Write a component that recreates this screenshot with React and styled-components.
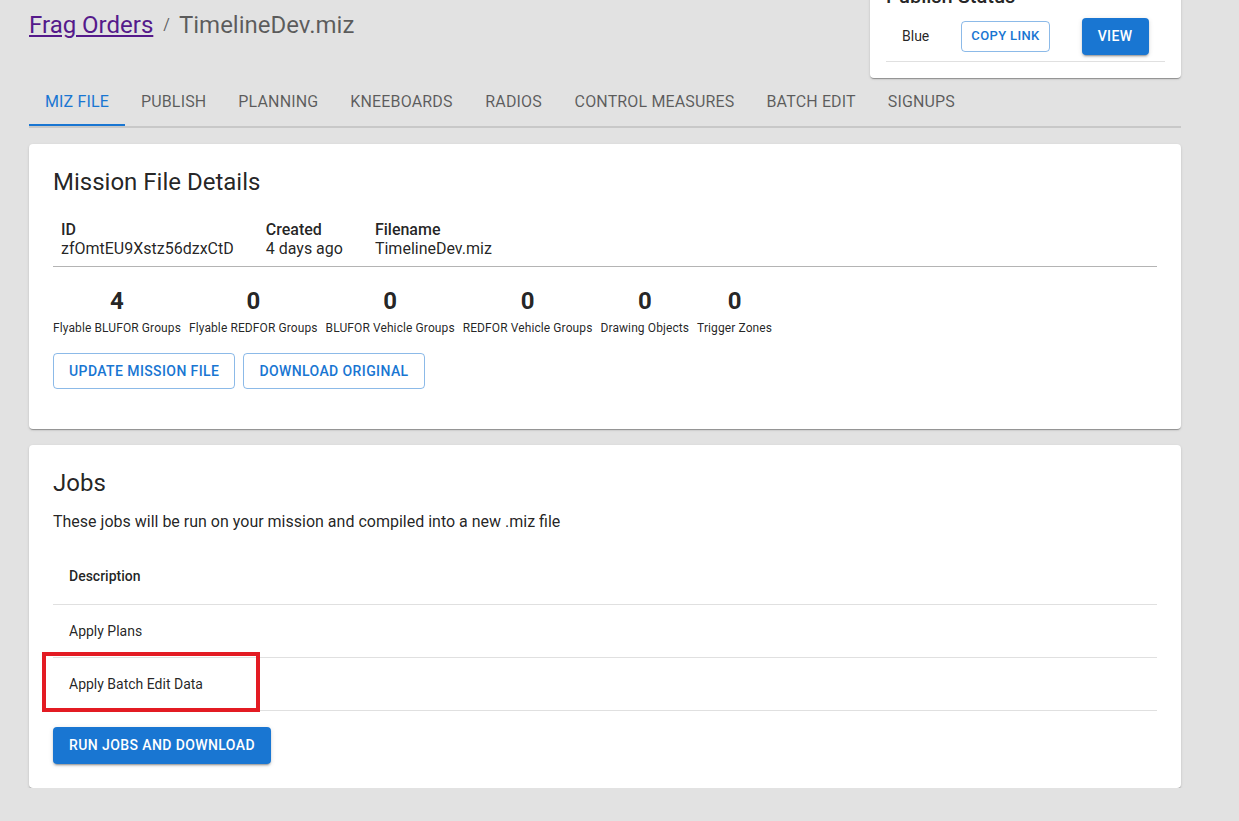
import React from "react";
import styled, { createGlobalStyle } from "styled-components";

const GlobalStyle = createGlobalStyle`
  html, body {
    margin: 0;
    padding: 0;
    background: #e2e2e2;
    font-family: Roboto, "Liberation Sans", Arial, sans-serif;
    color: rgba(0, 0, 0, 0.87);
    overflow: hidden;
  }
  *, *::before, *::after {
    box-sizing: border-box;
  }
`;

const Page = styled.main`
  width: 1152px;
  margin-left: 29px;
`;

const Header = styled.header`
  display: flex;
  justify-content: space-between;
  align-items: flex-start;
`;

const Breadcrumbs = styled.nav`
  display: flex;
  align-items: center;
  padding-top: 9px;
  font-size: 24px;
  line-height: 32px;
  color: rgba(0, 0, 0, 0.6);

  a {
    color: #551a8b;
    text-decoration: underline;
  }
`;

const Sep = styled.span`
  margin: 0 9px 0 10px;
  font-size: 16px;
`;

const Paper = styled.section`
  background: #fff;
  border-radius: 4px;
  box-shadow: 0px 2px 1px -1px rgba(0, 0, 0, 0.2), 0px 1px 1px 0px rgba(0, 0, 0, 0.14),
    0px 1px 3px 0px rgba(0, 0, 0, 0.12);
`;

const PublishCard = styled(Paper)`
  width: 311px;
  margin-top: -36px;
  padding: 16px;
`;

const PublishTitle = styled.h6`
  margin: 0;
  font-size: 20px;
  line-height: 32px;
  font-weight: 500;
`;

const Table = styled.table`
  width: ${(p) => (p.$auto ? "auto" : "100%")};
  border-collapse: collapse;
  border-spacing: 0;
  margin-top: ${(p) => p.$mt || 0}px;
`;

const Cell = styled.td`
  padding: ${(p) => (p.$small ? "6px 16px" : "16px")};
  border-bottom: 1px solid #e0e0e0;
  font-size: 14px;
  line-height: 20px;
  text-align: left;
  vertical-align: middle;
`;

const HeadCell = styled.th`
  padding: 16px;
  border-bottom: 1px solid #e0e0e0;
  font-size: 14px;
  line-height: 24px;
  font-weight: 500;
  text-align: left;
`;

const Button = styled.button`
  display: inline-flex;
  align-items: center;
  justify-content: center;
  font-family: Roboto, "Liberation Sans", Arial, sans-serif;
  font-weight: 500;
  text-transform: uppercase;
  letter-spacing: 0.02857em;
  border-radius: 4px;
  cursor: pointer;
  font-size: ${(p) => (p.$small ? "13px" : "14px")};
  line-height: ${(p) => (p.$small ? "22.75px" : "24.5px")};
  padding: ${(p) =>
    p.$variant === "contained" ? "6px 16px" : p.$small ? "3px 9px" : "5px 15px"};
  border: ${(p) =>
    p.$variant === "contained" ? "none" : "1px solid rgba(25, 118, 210, 0.5)"};
  background: ${(p) => (p.$variant === "contained" ? "#1976d2" : "transparent")};
  color: ${(p) => (p.$variant === "contained" ? "#fff" : "#1976d2")};
  box-shadow: ${(p) =>
    p.$variant === "contained"
      ? "0px 3px 1px -2px rgba(0,0,0,0.2), 0px 2px 2px 0px rgba(0,0,0,0.14), 0px 1px 5px 0px rgba(0,0,0,0.12)"
      : "none"};
`;

const Tabs = styled.div`
  display: flex;
  border-bottom: 2px solid #c8c8c8;
`;

const Tab = styled.div`
  height: 48px;
  min-width: 90px;
  padding: 2px 16px 0;
  display: flex;
  align-items: center;
  justify-content: center;
  font-size: 16px;
  letter-spacing: 0.15px;
  text-transform: uppercase;
  color: ${(p) => (p.$active ? "#1976d2" : "rgba(0, 0, 0, 0.6)")};
  border-bottom: 2px solid ${(p) => (p.$active ? "#1976d2" : "transparent")};
`;

const Card = styled(Paper)`
  margin-top: 16px;
  padding: 24px;
`;

const CardTitle = styled.h5`
  margin: 0;
  font-size: 24px;
  line-height: 28px;
  font-weight: 400;
`;

const InfoRow = styled.div`
  display: flex;
  gap: 32px;
  padding: 0 8px;
  margin-top: 24px;
  font-size: 16px;
  line-height: 19px;
`;

const InfoLabel = styled.div`
  font-weight: 500;
`;

const Divider = styled.hr`
  margin: 8px 0 0;
  border: none;
  border-top: 1px solid #b4b4b4;
`;

const Stats = styled.div`
  display: flex;
  gap: 8px;
  margin-top: 18px;
`;

const Stat = styled.div`
  display: flex;
  flex-direction: column;
  align-items: center;
`;

const StatValue = styled.div`
  font-size: 24px;
  line-height: 32px;
  font-weight: 700;
`;

const StatLabel = styled.div`
  font-size: 12px;
  line-height: 20px;
  letter-spacing: 0.1px;
  margin-top: 1px;
`;

const ButtonRow = styled.div`
  display: flex;
  gap: 8px;
  margin-top: 15px;
  margin-bottom: 16px;
`;

const Body = styled.p`
  margin: 13px 0 0;
  font-size: 16px;
  line-height: 24px;
`;

const Highlight = styled.span`
  position: relative;
  display: inline-block;
  line-height: 20px;

  &::after {
    content: "";
    position: absolute;
    left: -27px;
    top: -22px;
    width: 218px;
    height: 60px;
    border: 4px solid #e31b23;
  }
`;

const Footer = styled.div`
  margin-top: 16px;
`;

const tabs = [
  "Miz File",
  "Publish",
  "Planning",
  "Kneeboards",
  "Radios",
  "Control Measures",
  "Batch Edit",
  "Signups",
];

const stats = [
  [4, "Flyable BLUFOR Groups"],
  [0, "Flyable REDFOR Groups"],
  [0, "BLUFOR Vehicle Groups"],
  [0, "REDFOR Vehicle Groups"],
  [0, "Drawing Objects"],
  [0, "Trigger Zones"],
];

const info = [
  ["ID", "zfOmtEU9Xstz56dzxCtD"],
  ["Created", "4 days ago"],
  ["Filename", "TimelineDev.miz"],
];

export default function App() {
  return (
    <>
      <GlobalStyle />
      <Page>
        <Header>
          <Breadcrumbs>
            <a href="#">Frag Orders</a>
            <Sep>/</Sep>
            <span>TimelineDev.miz</span>
          </Breadcrumbs>
          <PublishCard>
            <PublishTitle>Publish Status</PublishTitle>
            <Table $auto>
              <tbody>
                <tr>
                  <Cell $small>Blue</Cell>
                  <Cell $small>
                    <Button $small>Copy Link</Button>
                  </Cell>
                  <Cell $small>
                    <Button $variant="contained">View</Button>
                  </Cell>
                </tr>
              </tbody>
            </Table>
          </PublishCard>
        </Header>

        <Tabs>
          {tabs.map((t, i) => (
            <Tab key={t} $active={i === 0}>
              {t}
            </Tab>
          ))}
        </Tabs>

        <Card>
          <CardTitle>Mission File Details</CardTitle>
          <InfoRow>
            {info.map(([label, value]) => (
              <div key={label}>
                <InfoLabel>{label}</InfoLabel>
                <div>{value}</div>
              </div>
            ))}
          </InfoRow>
          <Divider />
          <Stats>
            {stats.map(([value, label]) => (
              <Stat key={label}>
                <StatValue>{value}</StatValue>
                <StatLabel>{label}</StatLabel>
              </Stat>
            ))}
          </Stats>
          <ButtonRow>
            <Button>Update Mission File</Button>
            <Button>Download Original</Button>
          </ButtonRow>
        </Card>

        <Card>
          <CardTitle>Jobs</CardTitle>
          <Body>These jobs will be run on your mission and compiled into a new .miz file</Body>
          <Table $mt={14}>
            <thead>
              <tr>
                <HeadCell>Description</HeadCell>
              </tr>
            </thead>
            <tbody>
              <tr>
                <Cell>Apply Plans</Cell>
              </tr>
              <tr>
                <Cell>
                  <Highlight>Apply Batch Edit Data</Highlight>
                </Cell>
              </tr>
            </tbody>
          </Table>
          <Footer>
            <Button $variant="contained">Run Jobs and Download</Button>
          </Footer>
        </Card>
      </Page>
    </>
  );
}
